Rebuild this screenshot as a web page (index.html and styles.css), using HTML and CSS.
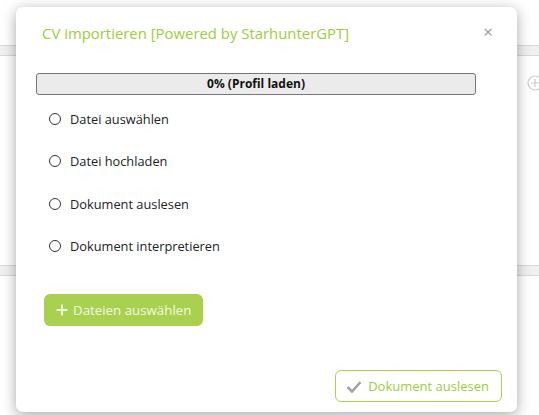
FILE: index.html
```html
<!DOCTYPE html>
<html>
<head>
<meta charset="utf-8">
<link rel="stylesheet" href="styles.css">
</head>
<body>
<div class="page">
  <div class="band band-top"></div>
  <div class="plus-circle">
    <svg width="16" height="16" viewBox="0 0 16 16"><circle cx="8" cy="8" r="7" fill="none" stroke="#ccc" stroke-width="1.2"/><path d="M8 4v8M4 8h8" stroke="#ccc" stroke-width="1.2"/></svg>
  </div>
  <div class="band band-bottom"></div>
</div>
<div class="modal">
  <div class="modal-header">
    <h4 class="modal-title">CV importieren [Powered by StarhunterGPT]</h4>
    <span class="close">×</span>
  </div>
  <div class="modal-body">
    <div class="progress">0% (Profil laden)</div>
    <ul class="steps">
      <li><span class="radio"></span>Datei auswählen</li>
      <li><span class="radio"></span>Datei hochladen</li>
      <li><span class="radio"></span>Dokument auslesen</li>
      <li><span class="radio"></span>Dokument interpretieren</li>
    </ul>
    <button class="btn-add"><svg class="plus" width="12" height="12" viewBox="0 0 12 12"><path d="M6 0.5v11M0.5 6h11" stroke="#f2f8e4" stroke-width="1.8"/></svg>Dateien auswählen</button>
  </div>
  <div class="modal-footer">
    <button class="btn-read">
      <svg width="16" height="13" viewBox="0 0 16 13"><path d="M1.5 7l4.5 4.5L14.5 2" fill="none" stroke="#a3a3a3" stroke-width="2.6"/></svg>
      Dokument auslesen
    </button>
  </div>
</div>
</body>
</html>
```
FILE: styles.css
```css
html, body {
  margin: 0;
  padding: 0;
  background: #fff;
  font-family: "Open Sans", "Liberation Sans", sans-serif;
}
.page {
  position: relative;
  height: 415px;
  overflow: hidden;
}
.band {
  position: absolute;
  left: 0;
  right: 0;
  height: 9px;
  background: #f0f0f0;
  border-top: 1px solid #d9d9d9;
  border-bottom: 1px solid #d9d9d9;
}
.band-top { top: 45px; }
.band-bottom { top: 265px; }
.plus-circle {
  position: absolute;
  left: 527px;
  top: 74px;
}
.modal {
  position: absolute;
  left: 16px;
  top: 7px;
  width: 501px;
  height: 405px;
  background: #fff;
  border-radius: 7px;
  box-shadow: 0 3px 14px rgba(0,0,0,0.35);
  display: flex;
  flex-direction: column;
  box-sizing: border-box;
}
.modal-header {
  display: flex;
  justify-content: space-between;
  align-items: flex-start;
  padding: 15px 24px 0 26px;
}
.modal-title {
  margin: 0;
  font-weight: 400;
  font-size: 14.9px;
  color: #9ccd3c;
  line-height: 22px;
}
.close {
  color: #999;
  font-size: 17px;
  line-height: 18px;
  margin-top: 1px;
}
.modal-body {
  padding: 29px 41px 0 20px;
  flex: 1;
}
.progress {
  height: 20px;
  border: 1px solid #777;
  border-radius: 3px;
  background: #ebebeb;
  text-align: center;
  font-weight: 700;
  font-size: 12px;
  line-height: 20px;
  color: #111;
}
.steps {
  list-style: none;
  margin: 13px 0 0 0;
  padding: 0 0 0 13px;
}
.steps li {
  display: flex;
  align-items: center;
  height: 21px;
  margin-bottom: 21.5px;
  font-size: 12.8px;
  color: #222;
}
.radio {
  width: 10px;
  height: 10px;
  border: 1px solid #333;
  border-radius: 50%;
  margin-right: 9px;
}
.btn-add {
  margin: 37px 0 0 8px;
  height: 32px;
  padding: 0 12px 0 12px;
  background: #a9d04f;
  border: none;
  border-radius: 6px;
  color: #f2f8e4;
  font-family: inherit;
  font-size: 13.3px;
  display: flex;
  align-items: center;
}
.plus {
  margin-right: 5px;
}
.modal-footer {
  display: flex;
  justify-content: flex-end;
  padding: 0 15px 10px 0;
}
.btn-read {
  height: 32px;
  padding: 0 12px 0 10px;
  background: #fff;
  border: 1.5px solid #a9d04f;
  border-radius: 6px;
  color: #9ccd3c;
  font-family: inherit;
  font-size: 13px;
  display: flex;
  align-items: center;
  gap: 6px;
}
```
